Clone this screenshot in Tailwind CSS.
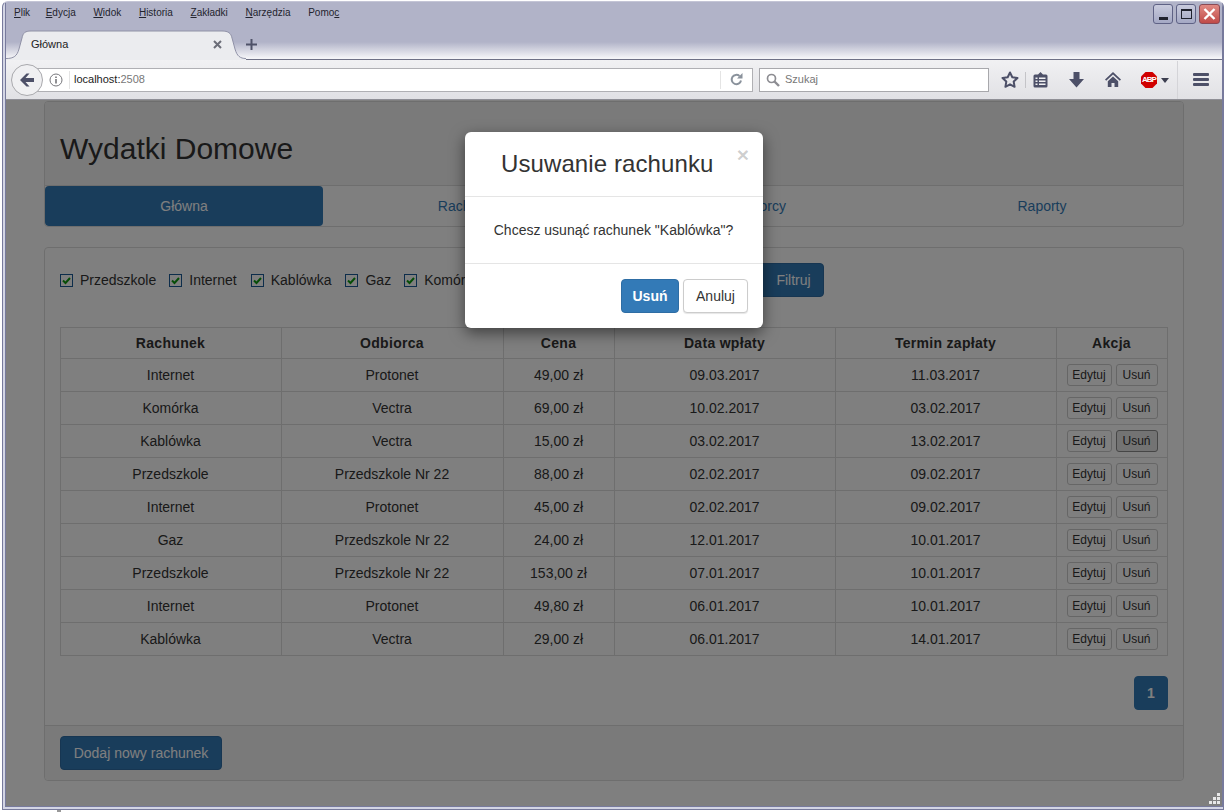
<!DOCTYPE html>
<html lang="pl">
<head>
    <meta charset="UTF-8">
    <title>Wydatki Domowe</title>
    <script src="https://cdn.jsdelivr.net/npm/@tailwindcss/browser@4"></script>
</head>
<body class="font-['Liberation_Sans',sans-serif] overflow-hidden">
<div class="relative w-[1226px] h-[812px] bg-white pt-px px-[2px] pb-[2px] overflow-hidden">
<div class="h-full border border-[#777a9c] border-t-[#c4c5d6] rounded-t-[6px] bg-[#d3d5e4] pl-[2px] pb-[2px] flex flex-col overflow-hidden">

    <!-- browser chrome -->
    <div class="border-x border-[#777a9c] flex flex-col shrink-0">
        <div class="h-[58px] bg-[linear-gradient(#b1b3c8_0,#b1b3c8_40px,#f4f4f7_56px)] border-b border-[#6f7186] flex flex-col relative">
            <!-- menu -->
            <div class="h-[29px] flex items-start pt-[4px] pl-[8px] gap-[17.7px] text-[10px] leading-[14px] text-[#23242e]">
                <span class="w-[14px]"><u>P</u>lik</span>
                <span><u>E</u>dycja</span>
                <span><u>W</u>idok</span>
                <span><u>H</u>istoria</span>
                <span><u>Z</u>akładki</span>
                <span><u>N</u>arzędzia</span>
                <span>Pomo<u>c</u></span>
            </div>
            <!-- window buttons -->
            <div class="absolute top-[2px] right-[2px] flex gap-[3px]">
                <div class="w-[20px] h-[20px] rounded-[3px] border border-[#5f6285] bg-linear-to-b from-[#c9cbdd] to-[#a4a8c4] flex items-end justify-center pb-[3px]"><div class="w-[9px] h-[3px] bg-[#20222e]"></div></div>
                <div class="w-[20px] h-[20px] rounded-[3px] border border-[#5f6285] bg-linear-to-b from-[#c9cbdd] to-[#a4a8c4] flex items-center justify-center"><div class="w-[11px] h-[10px] border border-t-2 border-[#20222e]"></div></div>
                <div class="w-[21px] h-[20px] rounded-[3px] border border-[#8a4a55] bg-linear-to-b from-[#e08a84] to-[#c04a48] flex items-center justify-center">
                    <svg width="13" height="12" viewBox="0 0 13 12"><path d="M1.500 1l10 10M11.500 1l-10 10" stroke="#fff" stroke-width="2.400" fill="none"/></svg>
                </div>
            </div>
            <!-- tab row -->
            <div class="h-[29px] flex items-center relative">
                <div class="w-[240px] h-[29px] relative shrink-0">
                    <svg class="absolute left-0 top-0" width="240" height="30" viewBox="0 0 240 30">
                        <path d="M0 28.500C8 28.500 11 26 13 19L16 8C17 3 19 1 25 1H216C222 1 225 3 226 8L229 19C231 26 234 28.500 240 28.500V30H0Z" fill="#ebecef"/>
                        <path d="M0 28.500C8 28.500 11 26 13 19L16 8C17 3 19 1 25 1H216C222 1 225 3 226 8L229 19C231 26 234 28.500 240 28.500" fill="none" stroke="#8f91a6"/>
                    </svg>
                    <span class="absolute left-[25px] top-[7px] text-[11px] leading-[14px] text-[#222]">Główna</span>
                    <svg class="absolute left-[207px] top-[10px]" width="9" height="9" viewBox="0 0 9 9"><path d="M1 1l7 7M8 1L1 8" stroke="#6b6d78" stroke-width="2" fill="none"/></svg>
                </div>
                <svg width="11" height="11" viewBox="0 0 11 11"><path d="M5.500 0v11M0 5.500h11" stroke="#4f5268" stroke-width="2"/></svg>
            </div>
        </div>

        <!-- toolbar -->
        <div class="h-[40px] bg-linear-to-b from-[#f1f1f3] to-[#e1e1e5] border-b border-[#8f8f96] flex items-center relative">
            <div class="absolute left-[5px] top-[4px] w-[32px] h-[32px] rounded-full border border-[#a9a9ad] bg-[#f0f0f2] z-10 flex items-center justify-center">
                <svg width="16" height="14" viewBox="0 0 16 14"><path d="M7.500 0.500L1 7l6.500 6.500h3L6.500 9H15V5H6.500l4-4.500z" fill="#4d5068"/></svg>
            </div>
            <div class="ml-[26px] w-[721px] h-[24px] bg-white border border-[#b0b0b4] flex items-center">
                <svg class="ml-[16px]" width="14" height="14" viewBox="0 0 14 14"><circle cx="7" cy="7" r="6" fill="none" stroke="#77777c"/><path d="M7 6v4.500M7 3.500v1.500" stroke="#55555a" stroke-width="1.300"/></svg>
                <div class="w-px h-[18px] bg-[#e4e4e4] ml-[6px]"></div>
                <span class="ml-[4px] text-[11px] text-[#222]">localhost:<span class="text-[#777]">2508</span></span>
                <div class="ml-auto w-px h-[18px] bg-[#e4e4e4]"></div>
                <svg class="mx-[9px]" width="13" height="13" viewBox="0 0 13 13"><path d="M11 7.500A4.700 4.700 0 1 1 9.500 3" fill="none" stroke="#8a929c" stroke-width="2"/><path d="M7 5.500h5.500V0z" fill="#8a929c"/></svg>
            </div>
            <div class="ml-[6px] w-[230px] h-[24px] bg-white border border-[#a8a8ac] flex items-center">
                <svg class="ml-[6px]" width="14" height="14" viewBox="0 0 14 14"><circle cx="5.500" cy="5.500" r="4" fill="none" stroke="#8d8d92" stroke-width="1.700"/><path d="M8.500 8.500l4.500 4.500" stroke="#8d8d92" stroke-width="2.400"/></svg>
                <span class="ml-[5px] text-[11px] text-[#777]">Szukaj</span>
            </div>
            <svg class="absolute left-[995px] top-[11px]" width="18" height="17" viewBox="0 0 18 17"><path d="M9 1.500l2.300 4.800 5.200.7-3.800 3.600.9 5.200L9 13.300l-4.600 2.500.9-5.200L1.500 7l5.200-.7z" fill="none" stroke="#4d5068" stroke-width="2" stroke-linejoin="round"/></svg>
            <div class="absolute left-[1019px] top-[12px] w-px h-[16px] bg-[#c4c4c8]"></div>
            <svg class="absolute left-[1027px] top-[11px]" width="15" height="17" viewBox="0 0 15 17"><path d="M2 3.500h3L7.500 1 10 3.500h3a1.500 1.500 0 0 1 1.500 1.500v10a1.500 1.500 0 0 1-1.500 1.500H2A1.500 1.500 0 0 1 .5 15V5A1.500 1.500 0 0 1 2 3.500z" fill="#4d5068"/><path d="M2.500 6.500h2v1.500h-2zM6 6.500h6.500v1.500H6zM2.500 9.500h2V11h-2zM6 9.500h6.500V11H6zM2.500 12.500h2V14h-2zM6 12.500h6.500V14H6z" fill="#f0f0f2"/></svg>
            <svg class="absolute left-[1063px] top-[11px]" width="15" height="17" viewBox="0 0 15 17"><path d="M4.500 1h6v7H15l-7.500 8.500L0 8h4.500z" fill="#4d5068"/></svg>
            <svg class="absolute left-[1099px] top-[11px]" width="16" height="17" viewBox="0 0 16 17"><path d="M8 1L0 8.500l1.200 1.200L8 3.500l6.800 6.200L16 8.500zM8 5.500L2.800 10.200V16H6.500v-4h3v4h3.700v-5.800z" fill="#4d5068"/></svg>
            <div class="absolute left-[1135px] top-[12px] w-[16px] h-[16px] bg-[#d00000] [clip-path:polygon(28%_0,72%_0,100%_28%,100%_72%,72%_100%,28%_100%,0_72%,0_28%)] flex items-center justify-center text-[8px] leading-none font-bold text-white tracking-[-1px]">ABP</div>
            <svg class="absolute left-[1155px] top-[18px]" width="8" height="5" viewBox="0 0 8 5"><path d="M0 0h8L4 5z" fill="#3c3e50"/></svg>
            <div class="absolute left-[1171px] top-[1px] w-px h-[38px] bg-[#d4d4d8]"></div>
            <div class="absolute left-[1187px] top-[13px] w-[16px] flex flex-col gap-[2px]">
                <div class="h-[3px] rounded-[1px] bg-[#4d5068]"></div>
                <div class="h-[3px] rounded-[1px] bg-[#4d5068]"></div>
                <div class="h-[3px] rounded-[1px] bg-[#4d5068]"></div>
            </div>
        </div>
    </div>

    <!-- page -->
    <div class="flex-1 relative overflow-hidden bg-white border border-t-0 border-[#777a9c] text-[14px] leading-[20px] text-[#333]">
        <div class="ml-[38px] w-[1140px]">
            <div class="mt-px border border-[#ddd] rounded-[4px] overflow-hidden">
                <div class="h-[84px] bg-[#f5f5f5] border-b border-[#ddd] pl-[15px] pt-[28px]">
                    <h1 class="text-[30px] leading-[38px] text-[#333]">Wydatki Domowe</h1>
                </div>
                <div class="grid grid-cols-[278px_288px_290px_282px] h-[40px] items-center text-center text-[#337ab7]">
                    <div class="h-[40px] leading-[40px] bg-[#337ab7] text-white rounded-[4px]">Główna</div>
                    <div>Rachunki</div>
                    <div class="pl-[4px]">Odbiorcy</div>
                    <div>Raporty</div>
                </div>
            </div>

            <div class="mt-[20px] h-[534px] border border-[#ddd] rounded-[4px] flex flex-col">
                <div class="flex-1 px-[15px] pt-[15px]">
                    <!-- filter -->
                    <div class="h-[34px] flex items-center relative">
                        <div class="flex items-center gap-[7px]"><svg width="13" height="13" viewBox="0 0 13 13"><rect x=".5" y=".5" width="12" height="12" fill="#fff" stroke="#1a5a96"/><path d="M3 6.500l2.500 2.500 4.500-5" stroke="#0f9a0f" stroke-width="2" fill="none"/></svg><span>Przedszkole</span></div>
                        <div class="ml-[13px] flex items-center gap-[7px]"><svg width="13" height="13" viewBox="0 0 13 13"><rect x=".5" y=".5" width="12" height="12" fill="#fff" stroke="#1a5a96"/><path d="M3 6.500l2.500 2.500 4.500-5" stroke="#0f9a0f" stroke-width="2" fill="none"/></svg><span>Internet</span></div>
                        <div class="ml-[14px] flex items-center gap-[7px]"><svg width="13" height="13" viewBox="0 0 13 13"><rect x=".5" y=".5" width="12" height="12" fill="#fff" stroke="#1a5a96"/><path d="M3 6.500l2.500 2.500 4.500-5" stroke="#0f9a0f" stroke-width="2" fill="none"/></svg><span>Kablówka</span></div>
                        <div class="ml-[14px] flex items-center gap-[7px]"><svg width="13" height="13" viewBox="0 0 13 13"><rect x=".5" y=".5" width="12" height="12" fill="#fff" stroke="#1a5a96"/><path d="M3 6.500l2.500 2.500 4.500-5" stroke="#0f9a0f" stroke-width="2" fill="none"/></svg><span>Gaz</span></div>
                        <div class="ml-[13px] flex items-center gap-[7px]"><svg width="13" height="13" viewBox="0 0 13 13"><rect x=".5" y=".5" width="12" height="12" fill="#fff" stroke="#1a5a96"/><path d="M3 6.500l2.500 2.500 4.500-5" stroke="#0f9a0f" stroke-width="2" fill="none"/></svg><span>Komórka</span></div>
                        <button class="absolute left-[688px] top-0 h-[34px] w-[76px] pl-[15px] text-center bg-[#337ab7] border border-[#2e6da4] rounded-[4px] text-white">Filtruj</button>
                    </div>

                    <table class="mt-[30px] w-[1107px] table-fixed border-collapse text-center">
                        <colgroup>
                            <col class="w-[221px]"><col class="w-[222px]"><col class="w-[111px]"><col class="w-[221px]"><col class="w-[221px]"><col class="w-[111px]">
                        </colgroup>
                        <thead>
                            <tr class="h-[31px] font-bold tracking-[0.3px]">
                                <th class="border border-[#ddd] p-0 pr-px">Rachunek</th>
                                <th class="border border-[#ddd] p-0 pr-px">Odbiorca</th>
                                <th class="border border-[#ddd] p-0 pr-px">Cena</th>
                                <th class="border border-[#ddd] p-0 pr-px">Data wpłaty</th>
                                <th class="border border-[#ddd] p-0 pr-px">Termin zapłaty</th>
                                <th class="border border-[#ddd] p-0 pr-px">Akcja</th>
                            </tr>
                        </thead>
                        <tbody id="rows"></tbody>
                    </table>

                    <div class="mt-[20px] flex justify-end">
                        <div class="w-[34px] h-[34px] leading-[32px] text-center font-bold bg-[#337ab7] border border-[#337ab7] rounded-[4px] text-white">1</div>
                    </div>
                </div>
                <div class="h-[55px] bg-[#f5f5f5] border-t border-[#ddd] px-[15px] pt-[10px] rounded-b-[4px]">
                    <button class="h-[34px] w-[162px] bg-[#337ab7] border border-[#2e6da4] rounded-[4px] text-white">Dodaj nowy rachunek</button>
                </div>
            </div>
        </div>

        <!-- modal -->
        <div class="absolute inset-0 bg-black/50"></div>
        <div class="absolute left-[459px] top-[32px] w-[298px] h-[196px] bg-white rounded-[6px] shadow-[0_5px_15px_rgba(0,0,0,0.5)] flex flex-col">
            <div class="h-[65px] border-b border-[#e5e5e5] flex items-center pl-[36px]">
                <h4 class="text-[24px] leading-[26px] text-[#333] tracking-[0.1px]">Usuwanie rachunku</h4>
            </div>
            <span class="absolute right-[14px] top-[12px] text-[21px] leading-[21px] font-bold text-black/20">×</span>
            <div class="h-[67px] border-b border-[#e5e5e5] flex items-center justify-center pr-px">Chcesz usunąć rachunek "Kablówka"?</div>
            <div class="flex-1 flex justify-end items-start gap-[4px] pt-[15px] pr-[15px]">
                <button class="h-[34px] w-[58px] bg-[#337ab7] border border-[#2e6da4] rounded-[4px] text-white font-bold">Usuń</button>
                <button class="h-[34px] w-[65px] bg-white border border-[#ccc] rounded-[4px] text-[#333] shadow-[0_1px_1px_rgba(0,0,0,0.1)]">Anuluj</button>
            </div>
        </div>

        <!-- resize grip -->
        <svg class="absolute right-[1px] bottom-[1px]" width="12" height="12" viewBox="0 0 12 12" fill="#e8e8e8"><path d="M8 0h3v3H8zM4 4h3v3H4zM8 4h3v3H8zM0 8h3v3H0zM4 8h3v3H4zM8 8h3v3H8z"/></svg>
    </div>
</div>
<div class="absolute left-[57px] bottom-0 w-[4px] h-[2px] bg-[#999]"></div>
</div>

<script>
    // wiersze tabeli rachunków
    const bills = [
        ['Internet', 'Protonet', '49,00 zł', '09.03.2017', '11.03.2017'],
        ['Komórka', 'Vectra', '69,00 zł', '10.02.2017', '03.02.2017'],
        ['Kablówka', 'Vectra', '15,00 zł', '03.02.2017', '13.02.2017'],
        ['Przedszkole', 'Przedszkole Nr 22', '88,00 zł', '02.02.2017', '09.02.2017'],
        ['Internet', 'Protonet', '45,00 zł', '02.02.2017', '09.02.2017'],
        ['Gaz', 'Przedszkole Nr 22', '24,00 zł', '12.01.2017', '10.01.2017'],
        ['Przedszkole', 'Przedszkole Nr 22', '153,00 zł', '07.01.2017', '10.01.2017'],
        ['Internet', 'Protonet', '49,80 zł', '06.01.2017', '10.01.2017'],
        ['Kablówka', 'Vectra', '29,00 zł', '06.01.2017', '14.01.2017'],
    ];
    const base = 'h-[22px] border rounded-[3px] text-[12px] leading-[18px] text-[#333]';
    const normal = 'bg-white border-[#ccc]';
    const active = 'bg-[#e6e6e6] border-[#8c8c8c]';
    document.getElementById('rows').innerHTML = bills.map((b, i) => `
        <tr class="h-[33px]">
            ${b.map(c => `<td class="border border-[#ddd] p-0 pr-px">${c}</td>`).join('')}
            <td class="border border-[#ddd] p-0">
                <div class="flex justify-center gap-[4px]">
                    <button class="${base} ${normal} w-[45px]">Edytuj</button>
                    <button class="${base} ${i === 2 ? active : normal} w-[42px]">Usuń</button>
                </div>
            </td>
        </tr>`).join('');
</script>
</body>
</html>
